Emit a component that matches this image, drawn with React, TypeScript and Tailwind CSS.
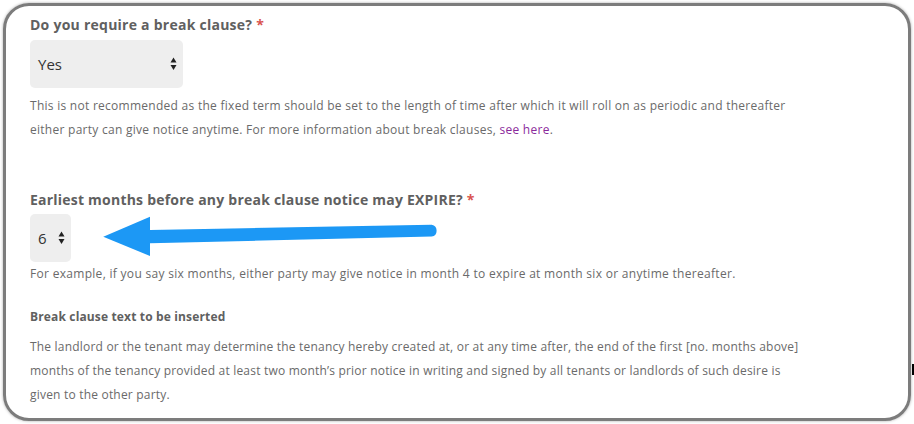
import type { FC } from "react";

const SelectArrows: FC = () => (
    <svg width="7" height="14" viewBox="0 0 7 14" className="shrink-0">
        <path d="M3.5 0.5 L6.5 5.5 L0.5 5.5 Z" fill="#222" />
        <path d="M0.5 8 L6.5 8 L3.5 13 Z" fill="#222" />
    </svg>
);

interface FakeSelectProps {
    value: string;
    widthClass: string;
}

const FakeSelect: FC<FakeSelectProps> = ({ value, widthClass }) => (
    <div className={`${widthClass} h-[48px] rounded-[5px] bg-[#eeeeee] flex items-center justify-between pl-[8px] pr-[6px]`}>
        <span className="text-[15px] text-[#333]">{value}</span>
        <SelectArrows />
    </div>
);

const BlueArrow: FC = () => (
    <svg
        className="absolute left-[100px] top-[213px]"
        width="340"
        height="48"
        viewBox="0 0 340 48"
    >
        <defs>
            <filter id="soft" x="-5%" y="-20%" width="110%" height="140%">
                <feGaussianBlur stdDeviation="0.4" />
            </filter>
        </defs>
        <g filter="url(#soft)" fill="#1b98f5">
            <path d="M3.3 23.7 L50 3.7 L50 17 L331.7 11.8 A6 6 0 0 1 331.7 23.6 L50 30.3 L50 43 Z" />
        </g>
    </svg>
);

export default function App() {
    return (
        <div
            className="relative w-[914px] h-[424px] bg-white overflow-hidden pt-[3px] pl-[3px]"
            style={{ fontFamily: '"Open Sans", "DejaVu Sans", sans-serif' }}
        >
            <div className="w-[908px] h-[418px] border-[3px] border-[#7c7c7c] rounded-[26px] shadow-[0_0_3px_rgba(0,0,0,0.35)] pl-[24px] pt-[9px]">
                <div className="text-[14px] leading-[20px] font-bold tracking-[0.25px] text-[#606060]">
                    Do you require a break clause? <span className="text-[#d9534f]">*</span>
                </div>
                <div className="mt-[5px]">
                    <FakeSelect value="Yes" widthClass="w-[153px]" />
                </div>
                <p className="mt-[6px] text-[12px] leading-[24px] tracking-[0.27px] text-[#6a6a6a]">
                    This is not recommended as the fixed term should be set to the length of time after which it will roll on as periodic and thereafter
                    <br />
                    either party can give notice anytime. For more information about break clauses,{" "}
                    <span className="text-[#8b2a9c]">see here</span>.
                </p>

                <div className="mt-[48px] text-[14px] leading-[20px] font-bold tracking-[0.22px] text-[#606060]">
                    Earliest months before any break clause notice may EXPIRE? <span className="text-[#d9534f]">*</span>
                </div>
                <div className="mt-[4px]">
                    <FakeSelect value="6" widthClass="w-[41px]" />
                </div>
                <p className="text-[12px] leading-[24px] tracking-[0.3px] text-[#6a6a6a]">
                    For example, if you say six months, either party may give notice in month 4 to expire at month six or anytime thereafter.
                </p>

                <div className="mt-[19px] text-[12px] leading-[24px] font-bold tracking-[0.15px] text-[#606060]">
                    Break clause text to be inserted
                </div>
                <p className="mt-[6px] text-[12px] leading-[24px] tracking-[0.2px] text-[#6a6a6a]">
                    The landlord or the tenant may determine the tenancy hereby created at, or at any time after, the end of the first [no. months above]
                    <br />
                    months of the tenancy provided at least two month&rsquo;s prior notice in writing and signed by all tenants or landlords of such desire is
                    <br />
                    given to the other party.
                </p>
            </div>

            <BlueArrow />
            <div className="absolute left-[912px] top-[364px] w-[2px] h-[11px] bg-black" />
        </div>
    );
}
